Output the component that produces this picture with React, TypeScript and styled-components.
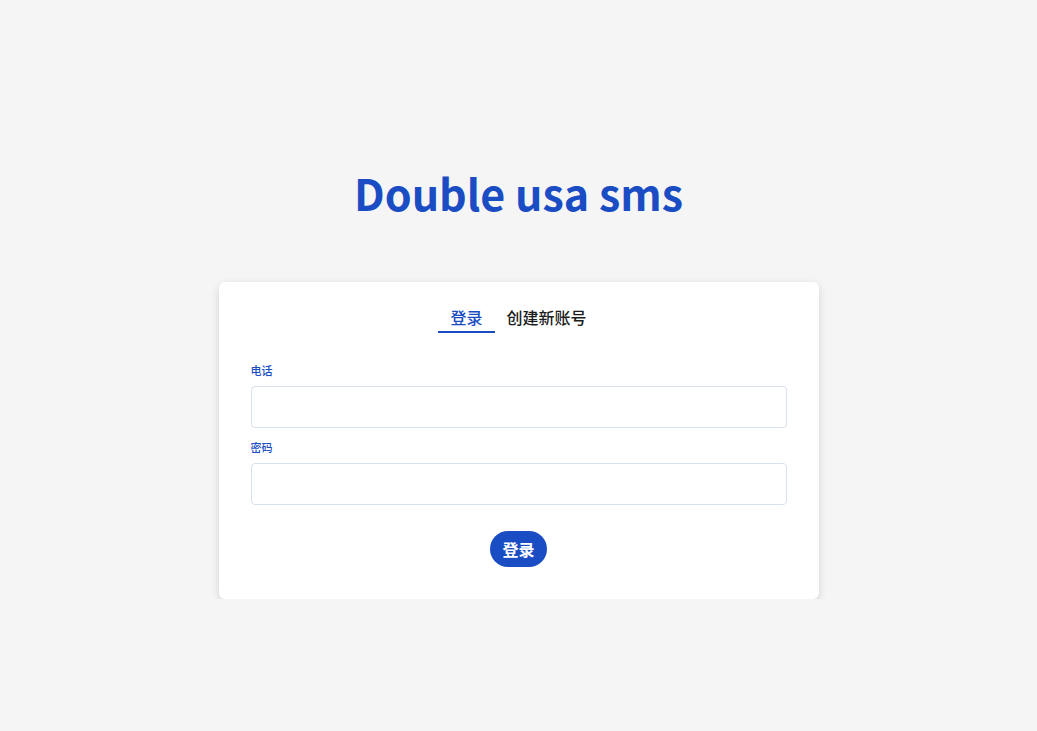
import { useState } from 'react'
import styled, { createGlobalStyle } from 'styled-components'

const GlobalStyle = createGlobalStyle`
    html, body {
        margin: 0;
        padding: 0;
        background: #f5f5f5;
        font-family: "Noto Sans CJK SC", "Noto Sans", sans-serif;
    }
`

export default function App() {
    const [tab, setTab] = useState<'login' | 'register'>('login')

    return (
        <>
            <GlobalStyle />
            <Page>
                <Title>Double usa sms</Title>
                <Card>
                    <Tabs>
                        <Tab $active={tab === 'login'} onClick={() => setTab('login')}>登录</Tab>
                        <Tab $active={tab === 'register'} onClick={() => setTab('register')}>创建新账号</Tab>
                    </Tabs>
                    <Form onSubmit={e => e.preventDefault()}>
                        <Field>
                            <Label>电话</Label>
                            <Input type="tel" />
                        </Field>
                        <Field>
                            <Label>密码</Label>
                            <Input type="password" />
                        </Field>
                        <SubmitButton type="submit">登录</SubmitButton>
                    </Form>
                </Card>
            </Page>
        </>
    )
}

/* ===========================
   styled-components
   =========================== */

const Page = styled.main`
    display: flex;
    flex-direction: column;
    align-items: center;
    padding-top: 164px;
`

const Title = styled.h1`
    margin: 0 0 62px;
    font-size: 43px;
    line-height: 56px;
    font-weight: 700;
    color: #1a4dc4;
`

const Card = styled.section`
    width: 600px;
    box-sizing: border-box;
    background: #fff;
    border-radius: 6px;
    box-shadow: 0 3px 8px rgba(0, 0, 0, 0.14);
    padding: 23px 32px 32px;
`

const Tabs = styled.div`
    display: flex;
    justify-content: center;
    margin-bottom: 29px;
`

const Tab = styled.button<{ $active: boolean }>`
    border: none;
    background: none;
    padding: 0 12px 2px;
    font-family: inherit;
    font-size: 16px;
    line-height: 24px;
    font-weight: 500;
    color: ${p => (p.$active ? '#1a4dc4' : '#1c1c1c')};
    border-bottom: 2px solid ${p => (p.$active ? '#1a4dc4' : 'transparent')};
    cursor: pointer;
`

const Form = styled.form`
    display: flex;
    flex-direction: column;
`

const Field = styled.label`
    display: flex;
    flex-direction: column;
    & + & {
        margin-top: 11px;
    }
`

const Label = styled.span`
    font-size: 11px;
    line-height: 16px;
    font-weight: 500;
    color: #1a4dc4;
    margin-bottom: 8px;
`

const Input = styled.input`
    height: 42px;
    box-sizing: border-box;
    border: 1px solid #d9e1ee;
    border-radius: 4px;
    padding: 0 12px;
    font-size: 14px;
    outline: none;
`

const SubmitButton = styled.button`
    align-self: center;
    margin-top: 26px;
    height: 36px;
    padding: 0 12px;
    border: none;
    border-radius: 18px;
    background: #1a4dc4;
    color: #fff;
    font-family: inherit;
    font-size: 16px;
    font-weight: 700;
    cursor: pointer;
`
